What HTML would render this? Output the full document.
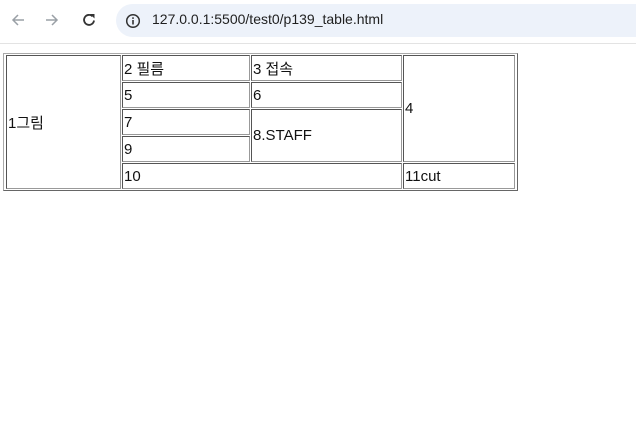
<!DOCTYPE html>
<html><head><meta charset="utf-8"><style>
body{margin:0;width:636px;height:424px;background:#fff;position:relative;overflow:hidden;font-family:"Liberation Sans","Noto Sans CJK KR",sans-serif}
.bar{position:absolute;left:0;top:0;width:636px;height:43px;background:#fff;border-bottom:1px solid #e3e3e3}
.pill{position:absolute;left:116px;top:4px;width:540px;height:33px;border-radius:17px;background:#edf2fa}
.url{position:absolute;left:152px;top:11px;font-size:14px;color:#1f1f1f}
.t{position:absolute;left:3px;top:53px;width:513px;height:136px;border:1px solid;border-color:#aaa #666 #666 #aaa}
.c{position:absolute;box-sizing:border-box;border:1px solid;border-color:#555 #999 #999 #555;font-size:15px;color:#111;display:flex;align-items:center;padding-left:1px}
</style></head><body>
<div class="bar">
<svg style="position:absolute;left:10px;top:12px" width="16" height="16" viewBox="0 0 16 16"><path d="M14 8H3M8 3L3 8l5 5" fill="none" stroke="#9aa0a6" stroke-width="1.5"/></svg>
<svg style="position:absolute;left:44px;top:12px" width="16" height="16" viewBox="0 0 16 16"><path d="M2 8h11M8 3l5 5-5 5" fill="none" stroke="#9aa0a6" stroke-width="1.5"/></svg>
<svg style="position:absolute;left:81px;top:12px" width="16" height="16" viewBox="0 0 16 16"><path d="M13 8.5A5 5 0 1 1 11.5 4.3" fill="none" stroke="#333" stroke-width="1.8"/><path d="M9 2h4.5v4.5z" fill="#333"/></svg>
<div class="pill"></div>
<svg style="position:absolute;left:125px;top:13px" width="16" height="16" viewBox="0 0 16 16"><circle cx="8" cy="8" r="6.3" fill="none" stroke="#333" stroke-width="1.5"/><rect x="7.2" y="7" width="1.6" height="4.5" fill="#333"/><rect x="7.2" y="4.3" width="1.6" height="1.6" fill="#333"/></svg>
<span class="url">127.0.0.1:5500/test0/p139_table.html</span>
</div>
<div class="t"></div>
<div class="c" style="left:6px;top:55px;width:115px;height:134px">1그림</div>
<div class="c" style="left:122px;top:55px;width:128px;height:26px">2 필름</div>
<div class="c" style="left:251px;top:55px;width:151px;height:26px">3 접속</div>
<div class="c" style="left:403px;top:55px;width:112px;height:107px">4</div>
<div class="c" style="left:122px;top:82px;width:128px;height:26px">5</div>
<div class="c" style="left:251px;top:82px;width:151px;height:26px">6</div>
<div class="c" style="left:122px;top:109px;width:128px;height:26px">7</div>
<div class="c" style="left:251px;top:109px;width:151px;height:53px">8.STAFF</div>
<div class="c" style="left:122px;top:136px;width:128px;height:26px">9</div>
<div class="c" style="left:122px;top:163px;width:280px;height:26px">10</div>
<div class="c" style="left:403px;top:163px;width:112px;height:26px">11cut</div>
</body></html>
